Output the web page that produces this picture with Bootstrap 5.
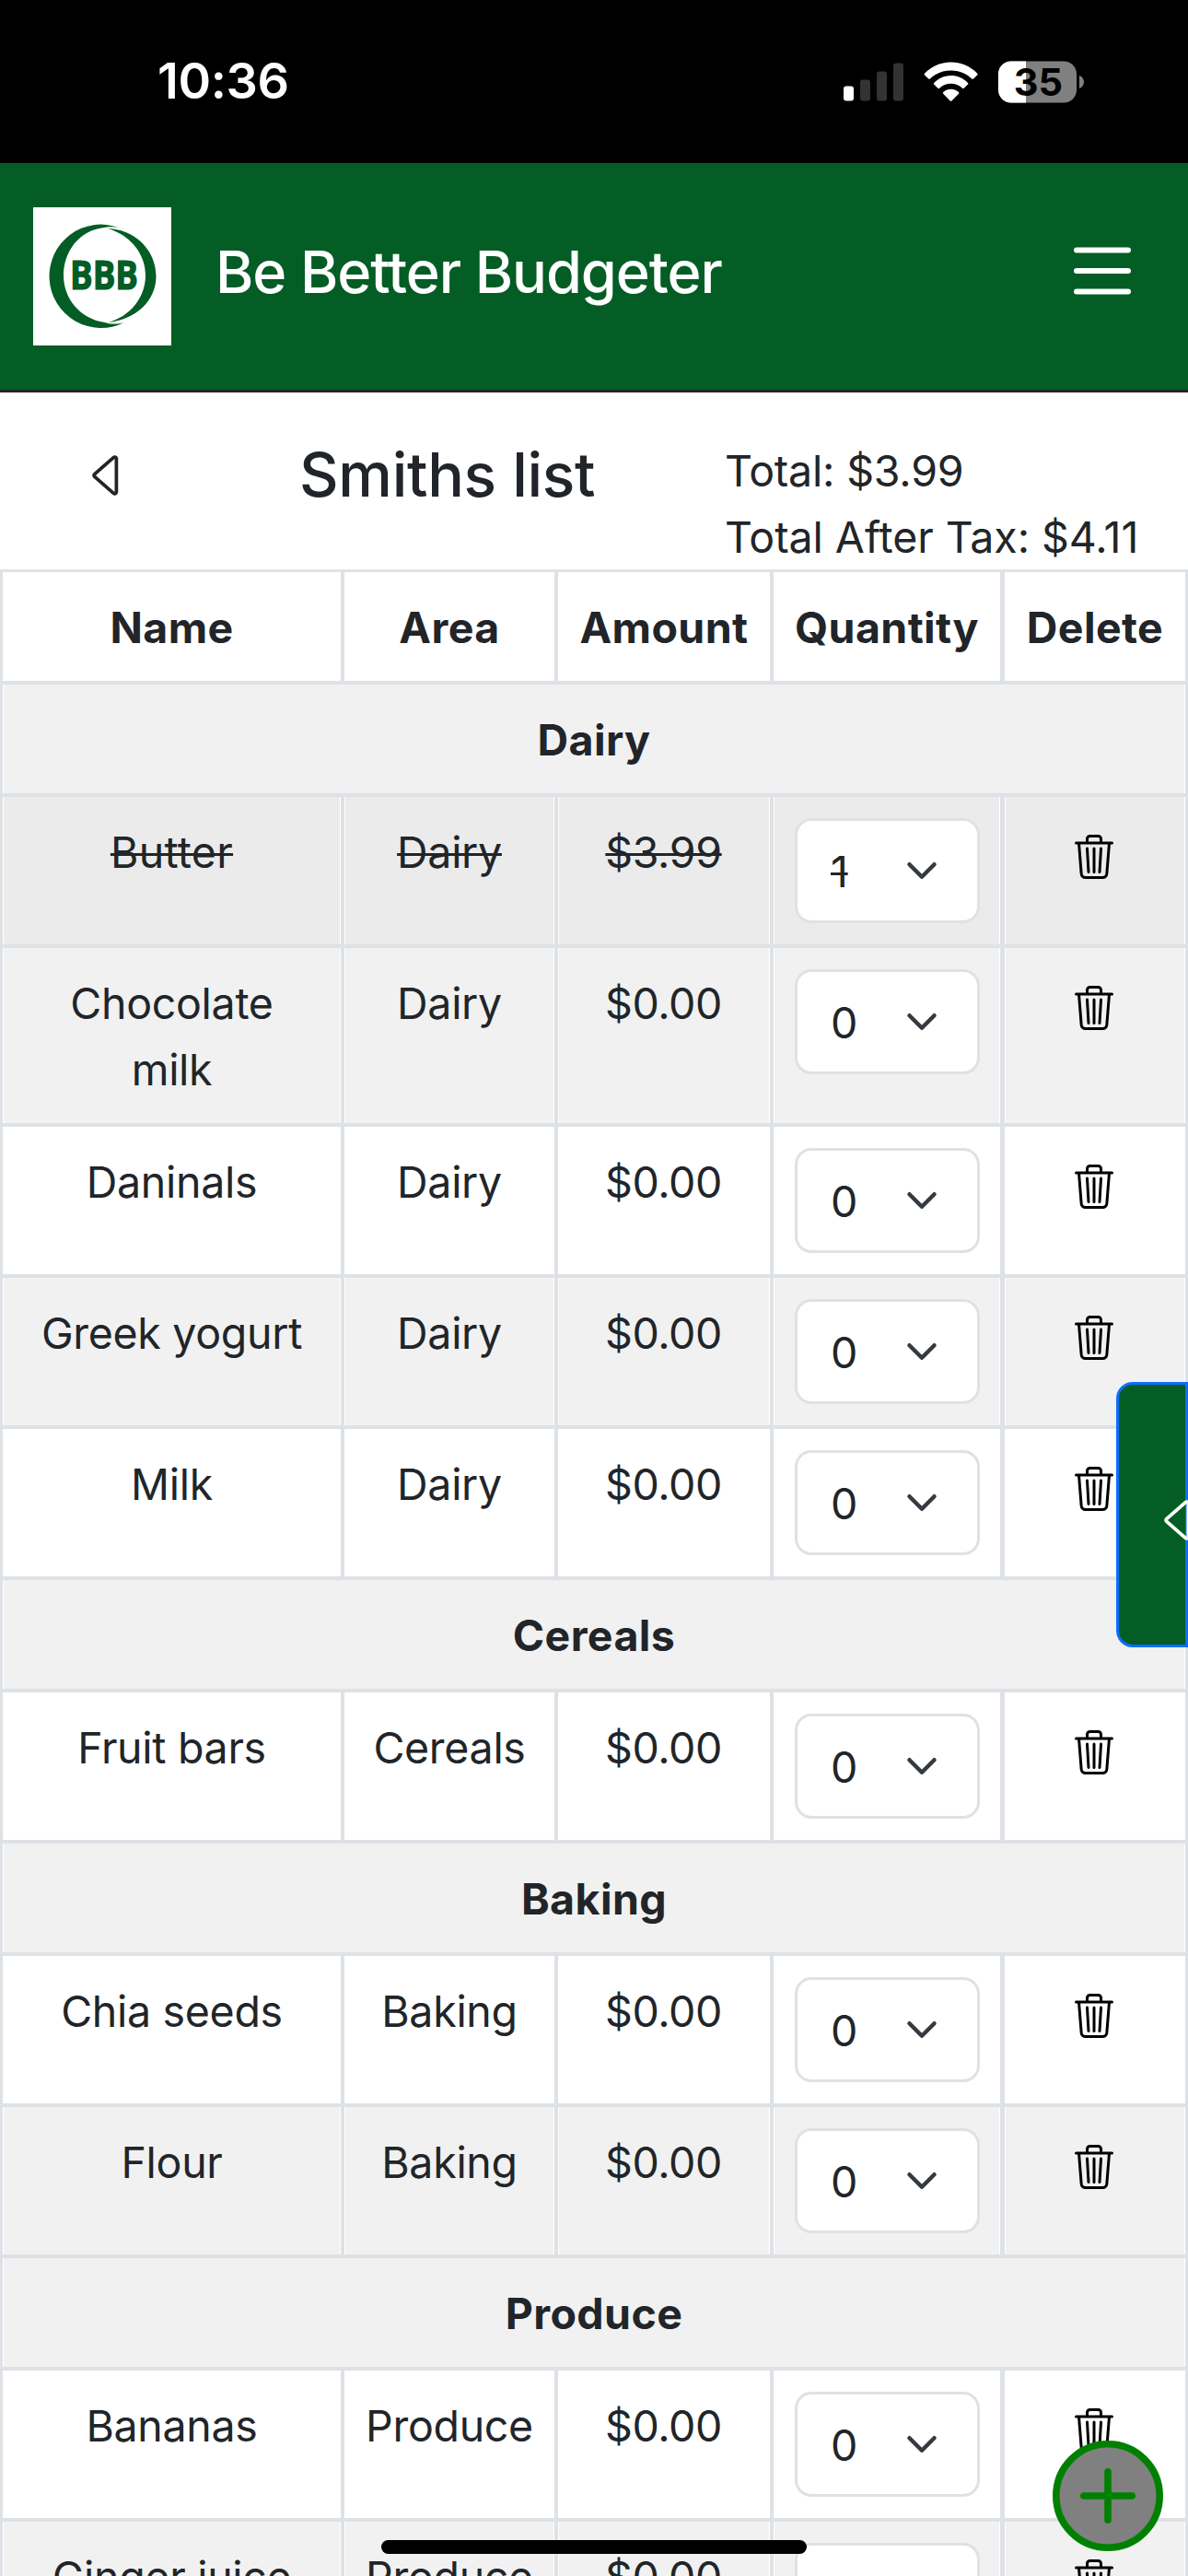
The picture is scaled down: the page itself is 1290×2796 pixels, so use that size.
<!DOCTYPE html>
<html lang="en">
<head>
<meta charset="utf-8">
<meta name="viewport" content="width=device-width, initial-scale=1">
<title>Be Better Budgeter</title>
<link href="https://cdn.jsdelivr.net/npm/bootstrap@5.3.0/dist/css/bootstrap.min.css" rel="stylesheet">
<style>
  html, body { height: 2796px; overflow: hidden; }
  body { position: relative; width: 1290px; font-family: Inter, "Liberation Sans", sans-serif; font-size: 46.5px; line-height: 72px; color: #212529; background: #fff; letter-spacing: -.3px; }
  svg { display: block; flex: none; }
  .status-strip { height: 177px; padding: 0 113px 0 171px; }
  .clock { font-size: 54px; font-weight: 600; letter-spacing: -.4px; margin-top: -2px; }
  .brand-bar { height: 249px; background: #035d24; border-bottom: 3px solid #212529; padding: 0 62px 0 36px; }
  .brand-logo { width: 150px; height: 150px; }
  .brand-name { font-size: 63px; font-weight: 500; letter-spacing: -1.05px; margin-left: 48px; margin-top: -10px; }
  .menu-lines { width: 62px; height: 52px; margin-top: -12px; }
  .list-head { height: 192px; padding-left: 87px; }
  .list-title { font-size: 66px; font-weight: 500; line-height: 80px; letter-spacing: -.3px; width: 640px; padding-left: 178px; margin-top: 49px; }
  .back-icon { margin-top: 60px; }
  .totals { margin-top: 49px; white-space: nowrap; letter-spacing: -.2px; }
  .totals div + div { letter-spacing: -.05px; }
  .grocery { table-layout: fixed; width: 1290px; border-collapse: separate; border-spacing: 0; text-align: center; margin: 0; }
  .grocery th, .grocery td { padding: 24px 12px 0; vertical-align: top; border: 0 solid #dee2e6; border-right-width: 4px; border-bottom-width: 4px; height: 164px; background: #fff; box-shadow: none; color: #212529; }
  .grocery tr > :first-child { border-left-width: 3px; }
  .grocery tr > :nth-child(4) { border-right-width: 5px; }
  .grocery tr > :last-child { border-right-width: 3px; }
  .grocery th { height: 122px; font-weight: 700; letter-spacing: .4px; white-space: nowrap; }
  .grocery thead th { border-top-width: 3px; height: 125px; }
  .grocery .tinted > * { background: #f1f1f1; box-shadow: inset 1px 0 #fff, inset -1px 0 #fff; }
  .grocery .bought > * { background: #ebebeb; box-shadow: inset 1px 0 #fff, inset -1px 0 #fff; text-decoration: line-through; text-decoration-thickness: 3px; }
  .grocery .bought > :first-child { letter-spacing: .3px; }
  .grocery .tall > * { height: 194px; }
  .grocery td:nth-child(3) { letter-spacing: -.4px; padding-right: 13px; }
  .grocery td:nth-child(4) { padding: 23px 22px 0 23px; }
  .grocery td:nth-child(5) { padding: 41px 13px 0 11px; }
  .grocery td svg { width: 48px; height: 48px; margin: 0 auto; }
  .qty { width: 201px; height: 114px; border: 3px solid #dee2e6; border-radius: 18px; padding: 19px 0 0 36px; font-size: 46.5px; line-height: 72px; text-align: left; background-color: #fff; background-size: 36px 36px; background-position: right 42px center; color: #212529; }
  .drawer-tab { position: absolute; left: 1212px; top: 1500px; width: 78px; height: 288px; background: #035d24; border: 3px solid #0d6efd; border-radius: 18px 0 0 18px; padding: 117px 0 0 36px; }
  .add-item { position: absolute; left: 1143px; top: 2649px; width: 120px; height: 120px; }
  .home-pill { position: absolute; left: 414px; top: 2757px; width: 462px; height: 15px; border-radius: 8px; background: #000; }
</style>
</head>
<body>
<svg width="0" height="0" class="position-absolute" aria-hidden="true">
  <symbol id="caret" viewBox="0 0 16 16"><path d="M10 12.796V3.204L4.519 8 10 12.796zm-.659.753-5.48-4.796a1 1 0 0 1 0-1.506l5.48-4.796A1 1 0 0 1 11 3.204v9.592a1 1 0 0 1-1.659.753z"/></symbol>
  <symbol id="bin" viewBox="0 0 16 16"><path d="M6.5 1h3a.5.5 0 0 1 .5.5v1H6v-1a.5.5 0 0 1 .5-.5ZM11 2.5v-1A1.5 1.5 0 0 0 9.5 0h-3A1.5 1.5 0 0 0 5 1.5v1H2.506a.58.58 0 0 0-.01 0H1.5a.5.5 0 0 0 0 1h.538l.853 10.66A2 2 0 0 0 4.885 16h6.23a2 2 0 0 0 1.994-1.84l.853-10.66h.538a.5.5 0 0 0 0-1h-.995a.59.59 0 0 0-.01 0H11Zm1.958 1-.846 10.58a1 1 0 0 1-.997.92h-6.23a1 1 0 0 1-.997-.92L3.042 3.5h9.916Zm-7.487 1a.5.5 0 0 1 .528.47l.5 8.5a.5.5 0 0 1-.998.06L5 5.03a.5.5 0 0 1 .47-.53Zm5.058 0a.5.5 0 0 1 .47.53l-.5 8.5a.5.5 0 1 1-.998-.06l.5-8.5a.5.5 0 0 1 .528-.47ZM8 4.5a.5.5 0 0 1 .5.5v8.5a.5.5 0 0 1-1 0V5a.5.5 0 0 1 .5-.5Z"/></symbol>
</svg>

<div class="status-strip bg-black text-white d-flex align-items-center justify-content-between">
  <span class="clock">10:36</span>
  <svg width="261" height="46" viewBox="0 0 261 46">
    <rect x="0" y="27.5" width="11" height="16" rx="3" fill="#fff"/>
    <rect x="18" y="20.5" width="11" height="23" rx="3" fill="#333"/>
    <rect x="36" y="11.5" width="11" height="32" rx="3" fill="#333"/>
    <rect x="54" y="2.5" width="11" height="41" rx="3" fill="#333"/>
    <g fill="#fff"><path d="M88 15.500a1.200 1.200 0 0 1 0-1.700C103-2.500 130-2.500 145.200 13.800a1.200 1.200 0 0 1 0 1.700L141 19.600a1.200 1.200 0 0 1-1.700 0C127 7.500 106 7.500 94 19.600a1.200 1.200 0 0 1-1.700 0Z"/>
    <path d="M98.200 25.600a1.200 1.200 0 0 1 0-1.700C108.500 13.500 124.700 13.500 135 23.900a1.200 1.200 0 0 1 0 1.700l-4.200 4.200a1.200 1.200 0 0 1-1.700 0C122 23 111 23 104.100 29.800a1.200 1.200 0 0 1-1.700 0Z"/>
    <path d="M108.200 35.800a1.200 1.200 0 0 1 0-1.700C113.500 29.700 119.700 29.700 125 34.100a1.200 1.200 0 0 1 0 1.700l-7.600 7.600a1.200 1.200 0 0 1-1.700 0Z"/></g>
    <clipPath id="cell"><rect x="168" y=".5" width="85" height="45" rx="14"/></clipPath>
    <g clip-path="url(#cell)"><rect x="168" width="86" height="46" fill="#808080"/><rect x="168" width="30" height="46" fill="#fff"/></g>
    <path d="M256 16c3 1 5 4 5 7s-2 6-5 7Z" fill="#808080"/>
    <text x="211.500" y="38" text-anchor="middle" font-size="41.500" font-weight="700" letter-spacing="0" fill="#000">35</text>
  </svg>
</div>

<nav class="brand-bar d-flex align-items-center text-white">
  <svg class="brand-logo" viewBox="0 0 150 150">
    <rect width="150" height="150" fill="#fff"/>
    <g fill="#035d24"><path d="M93 22A56.200 56.200 0 1 0 99 125C92 127 84 127 78 125C50 121 33 98 33 74C33 48 50 26 74 22.500C82 21 88 21 93 22Z"/>
    <path d="M81 23C111 24 133.500 47 133.500 75C133.500 101 112 122 81 125C105 119 122 98 122 74C122 50 105 30 81 23Z"/>
    <text x="40" y="88.500" font-family="Open Sans" font-weight="700" font-size="42.500" stroke="#035d24" stroke-width="1.200" letter-spacing="0" textLength="74" lengthAdjust="spacingAndGlyphs">BBB</text></g>
  </svg>
  <span class="brand-name">Be Better Budgeter</span>
  <svg class="menu-lines ms-auto" viewBox="0 0 62 52"><path d="M3 3.500H59M3 26H59M3 48.500H59" stroke="#fff" stroke-width="6" stroke-linecap="round"/></svg>
</nav>

<header class="list-head d-flex align-items-start">
  <svg class="back-icon" width="60" height="60" fill="#212529"><use href="#caret"/></svg>
  <h1 class="list-title mb-0">Smiths list</h1>
  <div class="totals"><div>Total: $3.99</div><div>Total After Tax: $4.11</div></div>
</header>

<table class="grocery table">
  <colgroup><col style="width:374px"><col style="width:232px"><col style="width:234px"><col style="width:251px"><col style="width:199px"></colgroup>
  <thead><tr><th>Name</th><th>Area</th><th>Amount</th><th>Quantity</th><th>Delete</th></tr></thead>
  <tbody>
    <tr class="tinted"><th colspan="5">Dairy</th></tr>
    <tr class="bought"><td>Butter</td><td>Dairy</td><td>$3.99</td><td><div class="form-select qty">1</div></td><td><svg><use href="#bin"/></svg></td></tr>
    <tr class="tinted tall"><td>Chocolate<br>milk</td><td>Dairy</td><td>$0.00</td><td><div class="form-select qty">0</div></td><td><svg><use href="#bin"/></svg></td></tr>
    <tr><td>Daninals</td><td>Dairy</td><td>$0.00</td><td><div class="form-select qty">0</div></td><td><svg><use href="#bin"/></svg></td></tr>
    <tr class="tinted"><td>Greek yogurt</td><td>Dairy</td><td>$0.00</td><td><div class="form-select qty">0</div></td><td><svg><use href="#bin"/></svg></td></tr>
    <tr><td>Milk</td><td>Dairy</td><td>$0.00</td><td><div class="form-select qty">0</div></td><td><svg><use href="#bin"/></svg></td></tr>
    <tr class="tinted"><th colspan="5">Cereals</th></tr>
    <tr><td>Fruit bars</td><td>Cereals</td><td>$0.00</td><td><div class="form-select qty">0</div></td><td><svg><use href="#bin"/></svg></td></tr>
    <tr class="tinted"><th colspan="5">Baking</th></tr>
    <tr><td>Chia seeds</td><td>Baking</td><td>$0.00</td><td><div class="form-select qty">0</div></td><td><svg><use href="#bin"/></svg></td></tr>
    <tr class="tinted"><td>Flour</td><td>Baking</td><td>$0.00</td><td><div class="form-select qty">0</div></td><td><svg><use href="#bin"/></svg></td></tr>
    <tr class="tinted"><th colspan="5">Produce</th></tr>
    <tr><td>Bananas</td><td>Produce</td><td>$0.00</td><td><div class="form-select qty">0</div></td><td><svg><use href="#bin"/></svg></td></tr>
    <tr class="tinted"><td>Ginger juice</td><td>Produce</td><td>$0.00</td><td><div class="form-select qty">0</div></td><td><svg><use href="#bin"/></svg></td></tr>
  </tbody>
</table>

<div class="drawer-tab"><svg width="60" height="60" fill="#fff"><use href="#caret"/></svg></div>
<svg class="add-item" viewBox="0 0 120 120"><circle cx="60" cy="60" r="56.200" fill="#808080" stroke="#008000" stroke-width="7.600"/><path d="M60 33.800V86.200M33.800 60H86.200" stroke="#008000" stroke-width="7.600" stroke-linecap="round"/></svg>
<div class="home-pill"></div>
<script src="https://cdn.jsdelivr.net/npm/bootstrap@5.3.0/dist/js/bootstrap.bundle.min.js"></script>
</body>
</html>
